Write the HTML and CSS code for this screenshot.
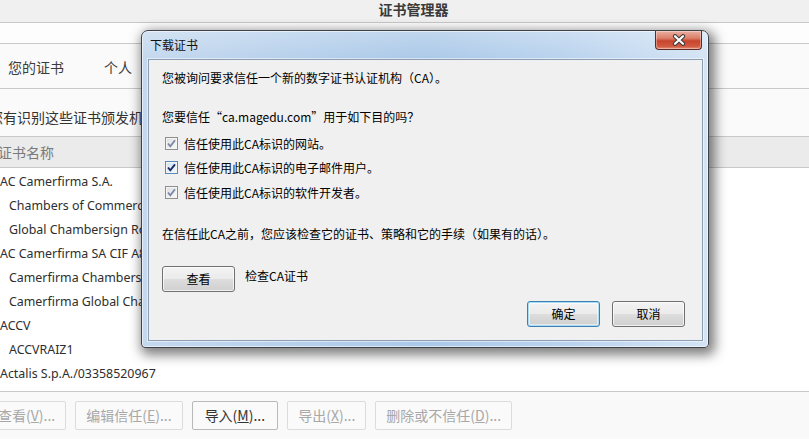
FILE: index.html
```html
<!DOCTYPE html>
<html lang="zh-CN">
<head>
<meta charset="utf-8">
<title>证书管理器</title>
<link rel="stylesheet" href="styles.css">
</head>
<body>
<div class="app">
  <header class="titlebar">证书管理器</header>
  <div class="strip"></div>
  <nav class="tabs">
    <span class="tab">您的证书</span>
    <span class="tab">个人</span>
  </nav>
  <main class="content">
    <p class="desc">您有识别这些证书颁发机构的证书：</p>
    <div class="colhead">证书名称</div>
    <ul class="list">
      <li class="grp">AC Camerfirma S.A.</li>
      <li class="item">Chambers of Commerce Root - 2008</li>
      <li class="item">Global Chambersign Root - 2008</li>
      <li class="grp">AC Camerfirma SA CIF A82743287</li>
      <li class="item">Camerfirma Chambers of Commerce Root</li>
      <li class="item">Camerfirma Global Chambersign Root</li>
      <li class="grp">ACCV</li>
      <li class="item">ACCVRAIZ1</li>
      <li class="grp">Actalis S.p.A./03358520967</li>
    </ul>
  </main>
  <footer class="actions">
    <button class="btn off">查看(<u>V</u>)...</button>
    <button class="btn off">编辑信任(<u>E</u>)...</button>
    <button class="btn on">导入(<u>M</u>)...</button>
    <button class="btn off">导出(<u>X</u>)...</button>
    <button class="btn off">删除或不信任(<u>D</u>)...</button>
  </footer>

  <section class="dialog">
    <div class="dlg-title">下载证书</div>
    <div class="dlg-close">
      <svg width="16" height="12" viewBox="0 0 16 12"><path d="M4 2.2 L12 9.8 M12 2.2 L4 9.8" stroke="#3b3b3b" stroke-width="4.2" stroke-linecap="round" fill="none"/><path d="M4 2.2 L12 9.8 M12 2.2 L4 9.8" stroke="#ffffff" stroke-width="2.2" stroke-linecap="round" fill="none"/></svg>
    </div>
    <div class="panel">
      <p class="l1">您被询问要求信任一个新的数字证书认证机构（CA）。</p>
      <p class="l2">您要信任“ca.magedu.com”用于如下目的吗？</p>
      <div class="checks">
        <label class="chk"><span class="cb dim"><svg width="11" height="11" viewBox="0 0 11 11"><path d="M2 5.5 L4.3 8.3 L9 2.3" stroke="#7a87a8" stroke-width="1.8" fill="none"/></svg></span>信任使用此CA标识的网站。</label>
        <label class="chk"><span class="cb focus"><svg width="11" height="11" viewBox="0 0 11 11"><path d="M2 5.5 L4.3 8.3 L9 2.3" stroke="#1b2a6b" stroke-width="1.9" fill="none"/></svg></span>信任使用此CA标识的电子邮件用户。</label>
        <label class="chk"><span class="cb dim"><svg width="11" height="11" viewBox="0 0 11 11"><path d="M2 5.5 L4.3 8.3 L9 2.3" stroke="#7a87a8" stroke-width="1.8" fill="none"/></svg></span>信任使用此CA标识的软件开发者。</label>
      </div>
      <p class="l4">在信任此CA之前，您应该检查它的证书、策略和它的手续（如果有的话）。</p>
      <div class="viewrow">
        <button class="wbtn">查看</button>
        <span class="viewlbl">检查CA证书</span>
      </div>
      <div class="okrow">
        <button class="wbtn default">确定</button>
        <button class="wbtn">取消</button>
      </div>
    </div>
  </section>
</div>
</body>
</html>
```
FILE: styles.css
```css
* { box-sizing: border-box; }
html, body { margin: 0; padding: 0; }
body {
  width: 809px;
  height: 439px;
  overflow: hidden;
  background: #fafafa;
  font-family: "Noto Sans", "Noto Sans CJK SC", sans-serif;
  color: #333;
}
.app { position: relative; width: 809px; height: 439px; overflow: hidden; }

.titlebar {
  height: 23px;
  background: #f0f0f0;
  border-bottom: 1px solid #c8c8c8;
  text-align: center;
  font-size: 14px;
  line-height: 18px;
  font-weight: bold;
  color: #3a3a3a;
  font-family: "Noto Sans CJK SC", sans-serif;
  padding-left: 18px;
}
.strip {
  height: 21px;
  background: #fdfdfd;
  border-bottom: 1px solid #c8c8c8;
}
.tabs {
  height: 45px;
  border-bottom: 1px solid #c8c8c8;
  display: flex;
  align-items: center;
  gap: 40px;
  padding: 1px 0 0 8px;
  font-family: "Noto Sans CJK SC", sans-serif;
  font-size: 14px;
  color: #3c3c3c;
}
.content { margin-left: -11px; background: #fff; }
.desc {
  margin: 0;
  height: 48px;
  padding-top: 19px;
  background: #fafafa;
  font-size: 14px;
  line-height: 18px;
  color: #333;
  font-family: "Noto Sans CJK SC", sans-serif;
  border-bottom: 1px solid #c8c8c8;
  white-space: nowrap;
}
.colhead {
  height: 31px;
  background: #ebebeb;
  border-bottom: 1px solid #c8c8c8;
  padding-left: 9px;
  font-size: 14px;
  line-height: 30px;
  color: #7a7a7a;
  font-family: "Noto Sans CJK SC", sans-serif;
}
.list {
  list-style: none;
  margin: 0;
  padding: 1px 0 0 0;
  height: 223px;
  background: #fff;
}
.list li {
  height: 24px;
  line-height: 25px;
  font-size: 12.4px;
  color: #2e2e2e;
  white-space: nowrap;
  padding-left: 11px;
}
.list li.item { padding-left: 20px; }

.actions {
  border-top: 1px solid #c8c8c8;
  background: #f9f9f9;
  height: 47px;
  display: flex;
  gap: 9px;
  padding: 9px 0 0 0;
  margin-left: -13px;
}
.btn {
  height: 29px;
  padding: 0 10px;
  border: 1px solid #dcdcdc;
  border-radius: 2px;
  background: #fafafa;
  font-family: "Noto Sans CJK SC", sans-serif;
  font-size: 14px;
  color: #a8a8a8;
  line-height: 27px;
  white-space: nowrap;
}
.btn.on { border-color: #b9b9b9; color: #333; padding: 0 12px; }

/* dialog */
.dialog {
  position: absolute;
  left: 141px;
  top: 30px;
  width: 568px;
  height: 318px;
  border: 1px solid #3e4247;
  border-radius: 7px 7px 4px 4px;
  background:
    linear-gradient(180deg, rgba(255,255,255,0.25), rgba(255,255,255,0) 28px),
    linear-gradient(90deg, #c5d9ef 0%, #b5cfeb 30%, #abc9e8 50%, #bad3ee 75%, #d4e4f5 100%);
  box-shadow: inset 0 0 0 1px rgba(255,255,255,0.55), 3px 4px 12px 3px rgba(0,0,0,0.5);
  padding: 0 5px 6px 6px;
  font-family: "Noto Sans CJK SC", sans-serif;
  font-size: 12px;
  color: #000;
}
.dlg-title {
  height: 28px;
  line-height: 28px;
  padding-left: 2px;
  font-size: 12px;
  color: #111;
}
.dlg-close {
  position: absolute;
  left: 513px;
  top: 0;
  width: 47px;
  height: 19px;
  border: 1px solid #5e2a22;
  border-top: none;
  border-radius: 0 0 4px 4px;
  background: linear-gradient(180deg, #eab0a2 0%, #dc7f6a 40%, #c7452d 55%, #d0593f 85%, #e6907a 100%);
  box-shadow: inset 0 0 0 1px rgba(255,255,255,0.35);
  display: flex;
  align-items: center;
  justify-content: center;
}
.panel {
  height: 282px;
  border: 1px solid #8d9db2;
  box-shadow: 0 0 0 1px rgba(255,255,255,0.5);
  background: #f0f0f0;
  padding: 0 17px 0 13px;
}
.panel p { margin: 0; line-height: 18px; white-space: nowrap; }
.l1 { padding-top: 9px; }
.l2 { margin-top: 21px !important; }
.checks { margin-top: 5px; }
.chk {
  display: flex;
  align-items: center;
  height: 24.5px;
  padding-left: 3px;
}
.cb {
  width: 13px;
  height: 13px;
  border: 1px solid #8e8f8f;
  background: linear-gradient(135deg, #dedede, #fafafa);
  box-shadow: inset 0 0 0 1px #f4f4f4;
  margin-right: 6px;
  display: flex;
  align-items: center;
  justify-content: center;
}
.cb.focus { border-color: #5b89b8; background: linear-gradient(135deg, #cfe3f5, #f4f9fd); }
.l4 { margin-top: 20px !important; }
.viewrow {
  margin-top: 23px;
  display: flex;
  align-items: center;
  gap: 10px;
}
.viewlbl { position: relative; top: -3px; }
.wbtn {
  width: 73px;
  height: 26px;
  border: 1px solid #707070;
  border-radius: 3px;
  background: linear-gradient(180deg, #f3f3f3 0%, #ebebeb 48%, #dddddd 52%, #cfcfcf 100%);
  box-shadow: inset 0 0 0 1px rgba(255,255,255,0.7);
  font-family: "Noto Sans CJK SC", sans-serif;
  font-size: 12px;
  color: #000;
  padding: 0;
  line-height: 24px;
}
.wbtn.default {
  border-color: #3c7fb1;
  box-shadow: inset 0 0 0 1px #a9dcf5, inset 0 0 0 2px rgba(255,255,255,0.5);
}
.okrow {
  margin-top: 9px;
  display: flex;
  justify-content: flex-end;
  gap: 12px;
}
```
